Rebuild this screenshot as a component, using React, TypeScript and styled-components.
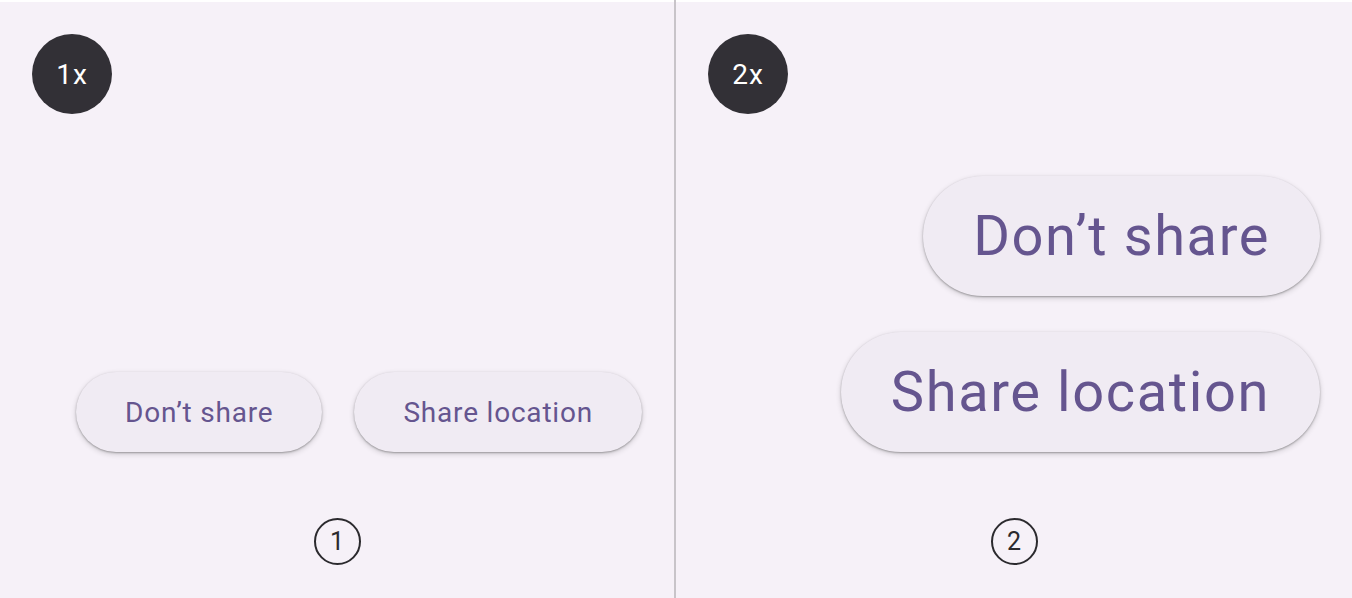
import React from "react";
import styled, { createGlobalStyle } from "styled-components";

const Global = createGlobalStyle`
  html, body { margin: 0; padding: 0; background: #ffffff; }
  body { font-family: Roboto, "Noto Sans", sans-serif; }
`;

const Page = styled.div`
  width: 1352px;
  height: 598px;
  display: grid;
  grid-template-columns: 674px 2px 676px;
  background: #ffffff;
  overflow: hidden;
`;

const Panel = styled.div`
  margin-top: 2px;
  background: #f6f1f8;
  display: flex;
  flex-direction: column;
  padding: 32px 32px 0 32px;
  box-sizing: border-box;
  height: 596px;
`;

const Divider = styled.div`
  background: #c8c4c9;
`;

const Badge = styled.div`
  width: 80px;
  height: 80px;
  border-radius: 50%;
  background: #323036;
  color: #ffffff;
  display: flex;
  align-items: center;
  justify-content: center;
  font-size: 28px;
  font-weight: 400;
  letter-spacing: 1px;
  flex: none;
`;

const Stage = styled.div<{ $dir: "row" | "column"; $gap: number }>`
  height: 338px;
  display: flex;
  flex-direction: ${(p) => p.$dir};
  justify-content: flex-end;
  align-items: flex-end;
  gap: ${(p) => p.$gap}px;
`;

const Pill = styled.button<{ $size: "sm" | "lg" }>`
  border: none;
  margin: 0;
  background: #f0ebf3;
  color: #65558f;
  font-family: Roboto, "Noto Sans", sans-serif;
  font-weight: 400;
  font-size: ${(p) => (p.$size === "sm" ? 28 : 56)}px;
  letter-spacing: ${(p) => (p.$size === "sm" ? 0.8 : 1.6)}px;
  height: ${(p) => (p.$size === "sm" ? 80 : 120)}px;
  padding: 0 ${(p) => (p.$size === "sm" ? 49 : 50)}px;
  border-radius: 999px;
  box-shadow: 0 1px 2px rgba(0, 0, 0, 0.3), 0 2px 5px 1px rgba(0, 0, 0, 0.12);
  display: flex;
  align-items: center;
  justify-content: center;
  white-space: nowrap;
  flex: none;
`;

const Footer = styled.div`
  display: flex;
  justify-content: center;
  margin-top: 66px;
  margin-left: -32px;
  margin-right: -32px;
`;

const Step = styled.div`
  width: 47px;
  height: 47px;
  box-sizing: border-box;
  border: 2px solid #2b2a2e;
  border-radius: 50%;
  color: #2b2a2e;
  display: flex;
  align-items: center;
  justify-content: center;
  font-size: 25px;
  font-weight: 400;
`;

export default function App() {
  return (
    <>
      <Global />
      <Page>
        <Panel>
          <Badge>1x</Badge>
          <Stage $dir="row" $gap={32}>
            <Pill $size="sm">Don’t share</Pill>
            <Pill $size="sm">Share location</Pill>
          </Stage>
          <Footer>
            <Step>1</Step>
          </Footer>
        </Panel>
        <Divider />
        <Panel>
          <Badge>2x</Badge>
          <Stage $dir="column" $gap={36}>
            <Pill $size="lg">Don’t share</Pill>
            <Pill $size="lg">Share location</Pill>
          </Stage>
          <Footer>
            <Step>2</Step>
          </Footer>
        </Panel>
      </Page>
    </>
  );
}
